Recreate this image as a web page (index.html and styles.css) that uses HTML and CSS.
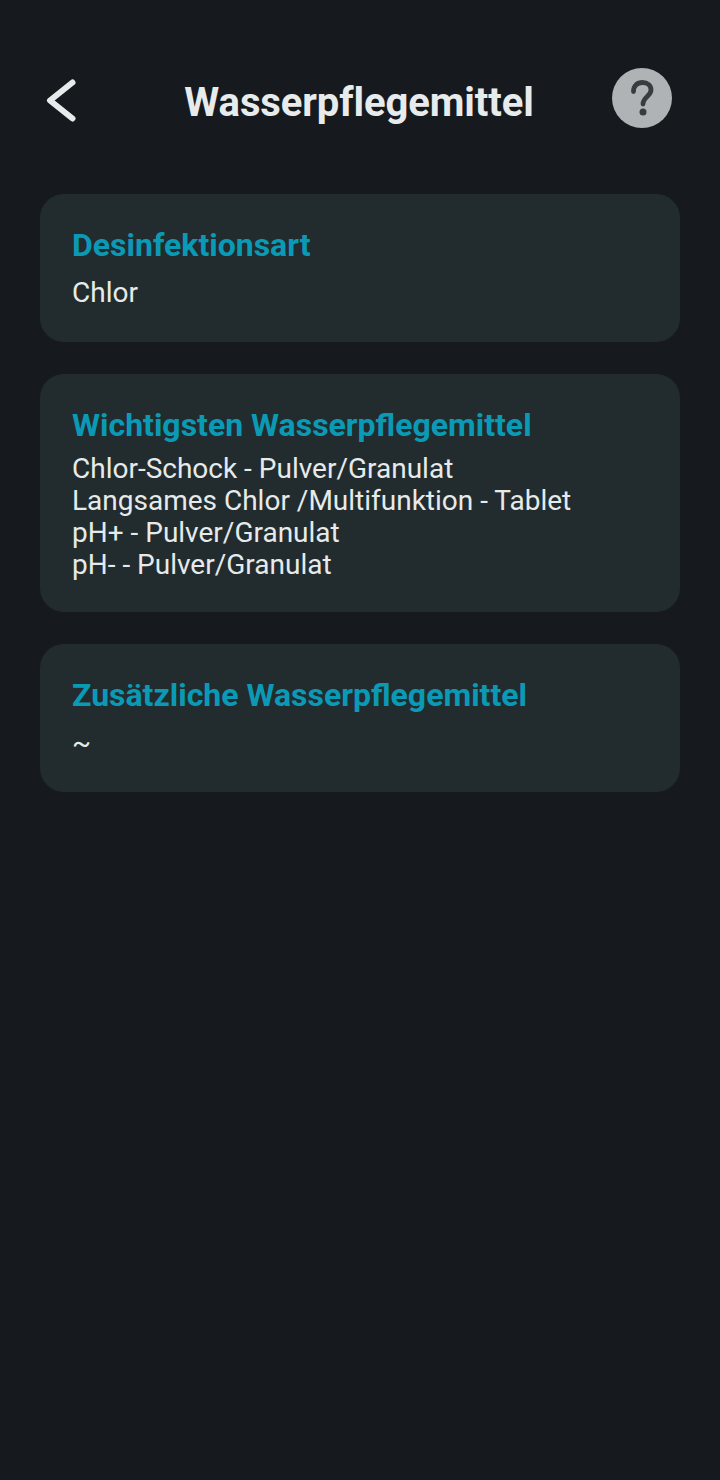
FILE: index.html
```html
<!DOCTYPE html>
<html lang="de">
<head>
  <meta charset="UTF-8">
  <meta name="viewport" content="width=device-width, initial-scale=1.0">
  <title>Wasserpflegemittel</title>
  <link rel="stylesheet" href="styles.css">
</head>
<body>
  <header class="top-bar">
    <button class="back-btn" aria-label="Zurück">
      <svg width="40" height="56" viewBox="0 0 40 56">
        <path d="M32.500 10.500 L10 28.500 L32.500 46.500" fill="none" stroke="#e8ebec" stroke-width="6" stroke-linecap="round" stroke-linejoin="round"/>
      </svg>
    </button>
    <h1>Wasserpflegemittel</h1>
    <div class="help-btn">
      <svg width="60" height="60" viewBox="0 0 60 60">
        <path d="M21.500 23.500 C21.500 17.500 25.500 14.500 30.500 14.500 C35.500 14.500 39 17.500 39 22 C39 28 31 29 31 36" fill="none" stroke="#383c3f" stroke-width="4.800" stroke-linecap="round"/>
        <circle cx="31" cy="44" r="3.500" fill="#383c3f"/>
      </svg>
    </div>
  </header>

  <main class="content">
    <section class="card">
      <h2>Desinfektionsart</h2>
      <p class="single">Chlor</p>
    </section>
    <section class="card">
      <h2>Wichtigsten Wasserpflegemittel</h2>
      <p>Chlor-Schock - Pulver/Granulat</p>
      <p>Langsames Chlor /Multifunktion - Tablet</p>
      <p>pH+ - Pulver/Granulat</p>
      <p>pH- - Pulver/Granulat</p>
    </section>
    <section class="card">
      <h2>Zusätzliche Wasserpflegemittel</h2>
      <p class="single">~</p>
    </section>
  </main>
</body>
</html>
```
FILE: styles.css
```css
* {
  box-sizing: border-box;
  margin: 0;
  padding: 0;
  font-family: Roboto, sans-serif;
}

body {
  background-color: #161a1f;
  width: 720px;
  height: 1480px;
  overflow: hidden;
}

.top-bar {
  display: flex;
  align-items: center;
  justify-content: space-between;
  height: 60px;
  margin-top: 68px;
  padding: 0 48px 0 40px;
}

.back-btn {
  display: flex;
  width: 66px;
  height: 56px;
  margin-top: 4px;
  background: none;
  border: none;
}

.top-bar h1 {
  color: #e8ebec;
  font-size: 40px;
  font-weight: 700;
  line-height: 48px;
  margin-top: 10px;
  letter-spacing: -0.1px;
}

.help-btn {
  width: 60px;
  height: 60px;
  border-radius: 50%;
  background-color: #b0b3b5;
}

.help-btn svg {
  display: block;
}

.content {
  display: flex;
  flex-direction: column;
  gap: 32px;
  margin-top: 66px;
  padding: 0 40px;
}

.card {
  background-color: #222c2e;
  border-radius: 24px;
  padding: 33px 32px 31px;
}

.card h2 {
  color: #0b9ab6;
  font-size: 32px;
  font-weight: 700;
  line-height: 36px;
  margin-bottom: 10px;
}

.card p {
  color: #e6eaeb;
  font-size: 28px;
  line-height: 32px;
}

.card p.single {
  margin-top: 14px;
  margin-bottom: 2px;
}
```
